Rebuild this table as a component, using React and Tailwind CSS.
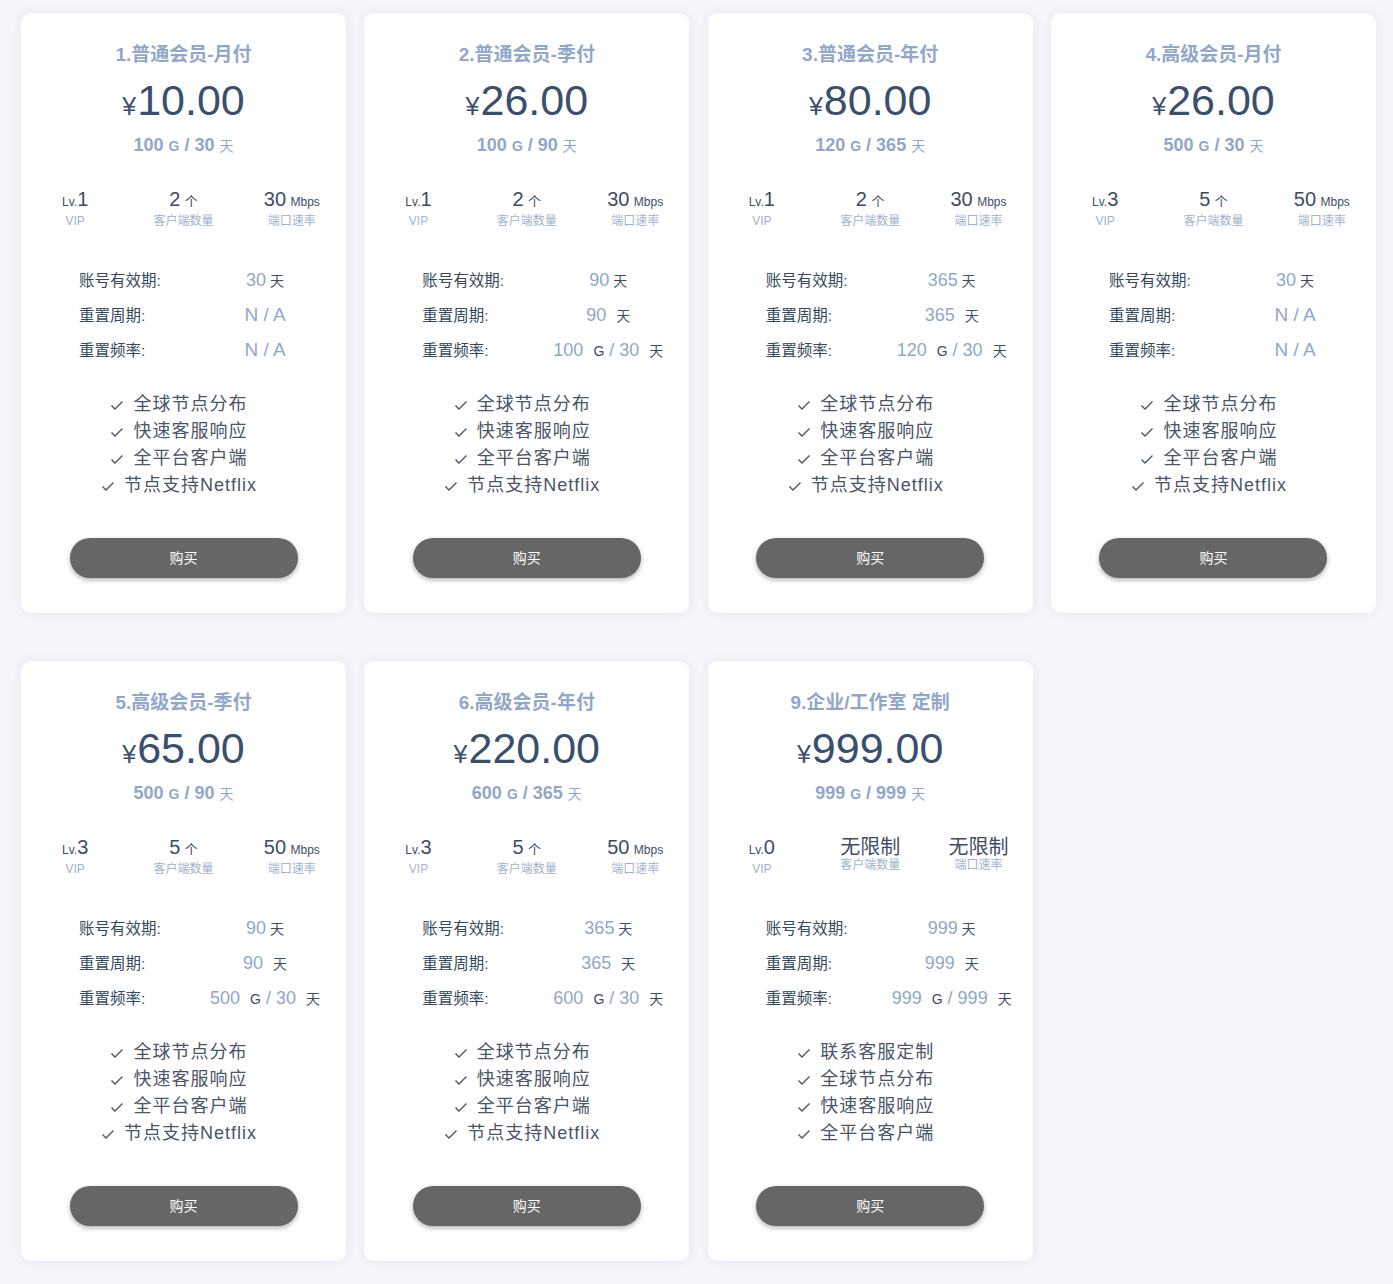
import React from "react";

const plans = [
  { title: "1.普通会员-月付", price: "10.00", traffic: "100", days: "30", lv: "1", clients: "2", speed: "30", valid: "30", cycle: null, reset: null, features: ["全球节点分布", "快速客服响应", "全平台客户端", "节点支持Netflix"] },
  { title: "2.普通会员-季付", price: "26.00", traffic: "100", days: "90", lv: "1", clients: "2", speed: "30", valid: "90", cycle: "90", reset: ["100", "30"], features: ["全球节点分布", "快速客服响应", "全平台客户端", "节点支持Netflix"] },
  { title: "3.普通会员-年付", price: "80.00", traffic: "120", days: "365", lv: "1", clients: "2", speed: "30", valid: "365", cycle: "365", reset: ["120", "30"], features: ["全球节点分布", "快速客服响应", "全平台客户端", "节点支持Netflix"] },
  { title: "4.高级会员-月付", price: "26.00", traffic: "500", days: "30", lv: "3", clients: "5", speed: "50", valid: "30", cycle: null, reset: null, features: ["全球节点分布", "快速客服响应", "全平台客户端", "节点支持Netflix"] },
  { title: "5.高级会员-季付", price: "65.00", traffic: "500", days: "90", lv: "3", clients: "5", speed: "50", valid: "90", cycle: "90", reset: ["500", "30"], features: ["全球节点分布", "快速客服响应", "全平台客户端", "节点支持Netflix"] },
  { title: "6.高级会员-年付", price: "220.00", traffic: "600", days: "365", lv: "3", clients: "5", speed: "50", valid: "365", cycle: "365", reset: ["600", "30"], features: ["全球节点分布", "快速客服响应", "全平台客户端", "节点支持Netflix"] },
  { title: "9.企业/工作室 定制", price: "999.00", traffic: "999", days: "999", lv: "0", clients: null, speed: null, valid: "999", cycle: "999", reset: ["999", "999"], features: ["联系客服定制", "全球节点分布", "快速客服响应", "全平台客户端"] },
];

const Check = () => (
  <svg width="14" height="14" viewBox="0 0 14 14" className="mr-[9px] inline-block" fill="none" stroke="#4a5568" strokeWidth="1.4">
    <path d="M1.5 7.5 L5 11 L12.5 3.5" />
  </svg>
);

const Stat = ({ children, label, big }) => (
  <div className="flex flex-col items-center">
    <div className={`h-[24px] leading-[24px] text-[#3d4d66] ${big ? "text-[20px]" : ""}`}>{children}</div>
    <div className={`text-[12px] leading-[16px] text-[#9fb2cf] ${big ? "-mt-[2px]" : "mt-[2px]"}`}>{label}</div>
  </div>
);

const Row = ({ label, children }) => (
  <div className="h-[35px] flex items-center">
    <div className="w-[117px] text-[15.5px] text-[#34495e]">{label}</div>
    <div className="w-[138px] flex items-baseline justify-center whitespace-pre">{children}</div>
  </div>
);

const Card = ({ plan }) => {
  const unlimited = plan.clients === null;
  return (
    <div className="w-[325px] h-[600px] bg-white rounded-[10px] shadow-[0_0_12px_rgba(40,50,90,0.08)] flex flex-col items-center pt-[28px]">
      <div className="h-[28px] leading-[28px] text-[19px] font-bold text-[#91a7c9]">{plan.title}</div>
      <div className="mt-[3px] h-[56px] leading-[56px] text-[#3a4f6e] flex items-baseline">
        <span className="text-[25px] mr-[1px]">¥</span>
        <span className="text-[43px]">{plan.price}</span>
      </div>
      <div className="mt-[5px] h-[24px] leading-[24px] text-[#91a7c9] font-bold text-[18px]">
        {plan.traffic} <span className="text-[14px]">G</span> / {plan.days} <span className="text-[14px] font-normal">天</span>
      </div>
      <div className="mt-[30px] w-full grid grid-cols-3">
        <Stat label="VIP">
          <span className="text-[12px]">Lv.</span><span className="text-[20px]">{plan.lv}</span>
        </Stat>
        {unlimited ? (
          <Stat label="客户端数量" big>无限制</Stat>
        ) : (
          <Stat label="客户端数量">
            <span className="text-[20px]">{plan.clients}</span> <span className="text-[13px]">个</span>
          </Stat>
        )}
        {unlimited ? (
          <Stat label="端口速率" big>无限制</Stat>
        ) : (
          <Stat label="端口速率">
            <span className="text-[20px]">{plan.speed}</span> <span className="text-[12px]">Mbps</span>
          </Stat>
        )}
      </div>
      <div className="mt-[34px] w-full pl-[58px] flex flex-col">
        <Row label="账号有效期:">
          <span className="text-[18px] text-[#91a7c9]">{plan.valid}</span>
          <span className="text-[14px] text-[#3d4d66]"> 天</span>
        </Row>
        <Row label="重置周期:">
          {plan.cycle ? (
            <>
              <span className="text-[18px] text-[#91a7c9]">{plan.cycle}</span>
              <span className="text-[14px] text-[#3d4d66] ml-[10px]">天</span>
            </>
          ) : (
            <span className="text-[19px] text-[#91a7c9]">N / A</span>
          )}
        </Row>
        <Row label="重置频率:">
          {plan.reset ? (
            <>
              <span className="text-[18px] text-[#91a7c9]">{plan.reset[0]}</span>
              <span className="text-[14px] text-[#3d4d66] ml-[10px]">G</span>
              <span className="text-[18px] text-[#91a7c9]"> / {plan.reset[1]}</span>
              <span className="text-[14px] text-[#3d4d66] ml-[10px]">天</span>
            </>
          ) : (
            <span className="text-[19px] text-[#91a7c9]">N / A</span>
          )}
        </Row>
      </div>
      <div className="mt-[23px] pr-[9px] flex flex-col items-center text-[18px] leading-[27px] tracking-[1px] text-[#4a5568]">
        {plan.features.map((f) => (
          <div key={f} className="flex items-center">
            <Check />
            {f}
          </div>
        ))}
      </div>
      <button className="mt-[39px] w-[228px] h-[40px] rounded-full bg-[#666666] text-white text-[14px] shadow-[0_2px_5px_rgba(0,0,0,0.3)]">
        购买
      </button>
    </div>
  );
};

export default function App() {
  return (
    <div
      className="min-h-[1284px] bg-[#f5f6fa] pt-[13px] pl-[21px] pb-[23px]"
      style={{ fontFamily: '"Liberation Sans", Arial, "Noto Sans CJK SC", sans-serif' }}
    >
      <div className="grid grid-cols-[repeat(4,325px)] gap-x-[18.33px] gap-y-[48px]">
        {plans.map((p) => (
          <Card key={p.title} plan={p} />
        ))}
      </div>
    </div>
  );
}
